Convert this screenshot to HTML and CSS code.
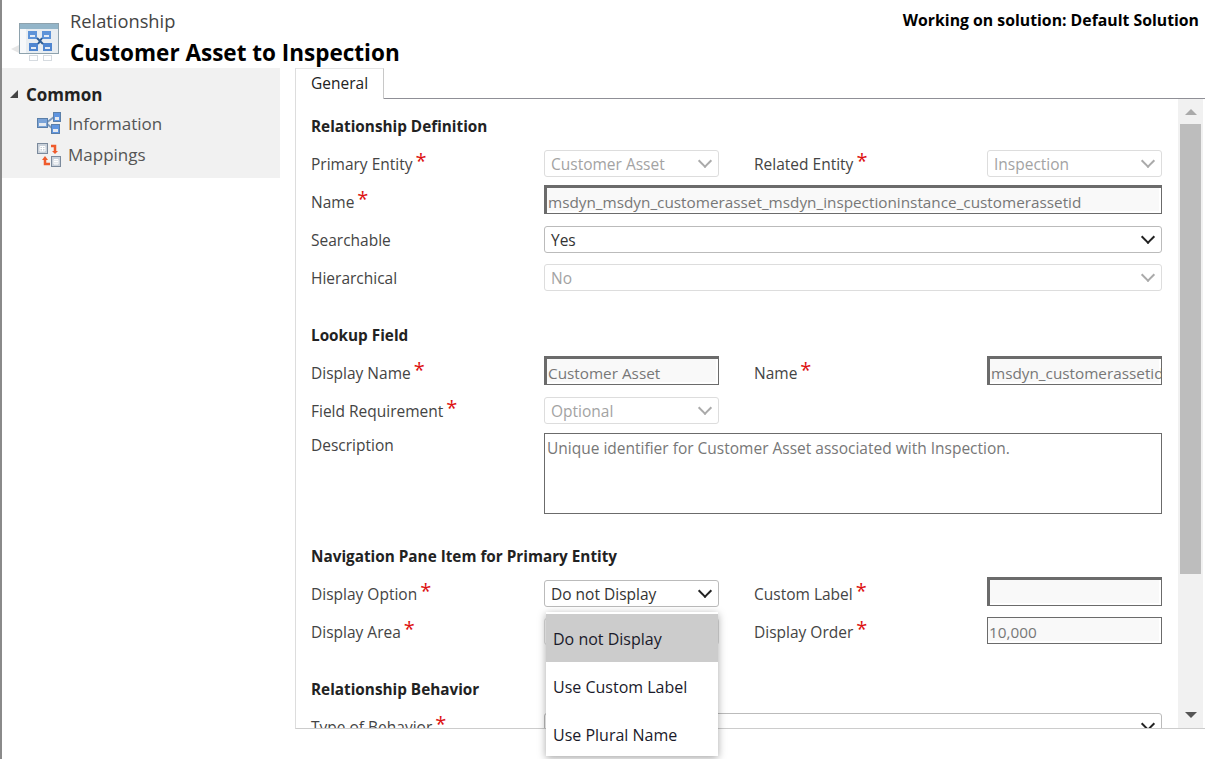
FILE: index.html
```html
<!DOCTYPE html>
<html lang="en">
<head>
    <meta charset="UTF-8">
    <meta name="viewport" content="width=device-width, initial-scale=1.0">
    <title>Relationship - Customer Asset to Inspection</title>
    <link rel="stylesheet" href="styles.css">
</head>
<body>
    <header class="top">
        <svg class="big-icon" width="50" height="50" viewBox="0 0 50 50">
            <path d="M8 27 L0 31 L8 35 Z" fill="#e6e6e6"/>
            <rect x="8.500" y="5.500" width="39" height="30" fill="#e8edf1" stroke="#8ea2ad"/>
            <rect x="9" y="6" width="38" height="5" fill="#93b5c9"/>
            <rect x="9" y="11" width="6" height="24" fill="#f6f8fa"/>
            <rect x="17" y="13" width="9" height="8" fill="#5d93d8"/>
            <rect x="31" y="13" width="9" height="8" fill="#5d93d8"/>
            <rect x="18" y="25" width="9" height="8" fill="#4f86d0"/>
            <rect x="32" y="25" width="9" height="8" fill="#4f86d0"/>
            <rect x="19" y="17" width="5" height="2" fill="#e3ebf5"/>
            <rect x="33" y="17" width="5" height="2" fill="#e3ebf5"/>
            <rect x="20" y="29" width="5" height="2" fill="#e3ebf5"/>
            <rect x="34" y="29" width="5" height="2" fill="#e3ebf5"/>
            <path d="M26 20 L32 26 M31 20 L27 26" stroke="#2f5f98" stroke-width="2"/>
            <rect x="18.500" y="37.500" width="8" height="5" fill="none" stroke="#d6dbe0"/>
            <rect x="32.500" y="37.500" width="8" height="5" fill="none" stroke="#d6dbe0"/>
        </svg>
        <div class="titles">
            <div class="kind">Relationship</div>
            <h1>Customer Asset to Inspection</h1>
        </div>
        <div class="solution">Working on solution: Default Solution</div>
    </header>

    <div class="page">
        <nav class="side">
            <div class="side-head"><span class="tri"></span>Common</div>
            <div class="side-item">
                <svg width="24" height="24" viewBox="0 0 24 24">
                    <path d="M9 11 L17 5 M9 11 L16 17" stroke="#7d9cc0" stroke-width="2" fill="none"/>
                    <rect x="0.500" y="6.500" width="10" height="9" fill="#7aa3d8" stroke="#5b7fa8"/>
                    <rect x="16.500" y="0.500" width="7" height="9" fill="#5f95e0" stroke="#5b7fa8"/>
                    <rect x="14.500" y="12.500" width="8" height="9" fill="#5f95e0" stroke="#5b7fa8"/>
                    <rect x="2" y="11" width="7" height="3" fill="#e5eaf0"/>
                    <rect x="18" y="5" width="4" height="3" fill="#e5eaf0"/>
                    <rect x="16" y="17" width="5" height="3" fill="#e5eaf0"/>
                </svg>
                Information
            </div>
            <div class="side-item">
                <svg width="24" height="24" viewBox="0 0 24 24">
                    <rect x="0.500" y="0.500" width="10" height="10" fill="#c9d1da" stroke="#7b8a9c"/>
                    <rect x="14.500" y="13.500" width="9" height="10" fill="#c9d1da" stroke="#7b8a9c"/>
                    <path d="M3 3.500 H8 V8 H3 Z M5.500 3 V8 M3 5.500 H8" stroke="#fff" fill="none"/>
                    <path d="M17 16.500 H21 V21 H17 Z M19 16 V21 M17 18.500 H21" stroke="#fff" fill="none"/>
                    <path d="M14 3 H18 V8" stroke="#ef5b2c" stroke-width="2.500" fill="none"/>
                    <path d="M15 8 H21 L18 11 Z" fill="#ef5b2c"/>
                    <path d="M13 21 H8 V17" stroke="#ef5b2c" stroke-width="2.500" fill="none"/>
                    <path d="M5 17 H11 L8 13 Z" fill="#ef5b2c"/>
                </svg>
                Mappings
            </div>
        </nav>

        <main class="content">
            <div class="tabs"><div class="tab">General</div></div>
            <div class="scroll-wrap">
                <div class="form">
                    <h2>Relationship Definition</h2>
                    <div class="row">
                        <label>Primary Entity<i>*</i></label>
                        <div class="select off">Customer Asset<span class="chev"></span></div>
                        <label class="second">Related Entity<i>*</i></label>
                        <div class="select off">Inspection<span class="chev"></span></div>
                    </div>
                    <div class="row">
                        <label>Name<i>*</i></label>
                        <div class="input wide">msdyn_msdyn_customerasset_msdyn_inspectioninstance_customerassetid</div>
                    </div>
                    <div class="row">
                        <label>Searchable</label>
                        <div class="select wide">Yes<span class="chev"></span></div>
                    </div>
                    <div class="row">
                        <label>Hierarchical</label>
                        <div class="select off wide">No<span class="chev"></span></div>
                    </div>

                    <h2 class="gap">Lookup Field</h2>
                    <div class="row">
                        <label>Display Name<i>*</i></label>
                        <div class="input">Customer Asset</div>
                        <label class="second">Name<i>*</i></label>
                        <div class="input">msdyn_customerassetid</div>
                    </div>
                    <div class="row">
                        <label>Field Requirement<i>*</i></label>
                        <div class="select off">Optional<span class="chev"></span></div>
                    </div>
                    <div class="row row-desc">
                        <label>Description</label>
                        <div class="textarea wide">Unique identifier for Customer Asset associated with Inspection.</div>
                    </div>

                    <h2 class="gap2">Navigation Pane Item for Primary Entity</h2>
                    <div class="row">
                        <label>Display Option<i>*</i></label>
                        <div class="select">Do not Display<span class="chev"></span></div>
                        <label class="second">Custom Label<i>*</i></label>
                        <div class="input"></div>
                    </div>
                    <div class="row">
                        <label>Display Area<i>*</i></label>
                        <div class="select off"></div>
                        <label class="second">Display Order<i>*</i></label>
                        <div class="input thin">10,000</div>
                    </div>

                    <h2 class="gap3">Relationship Behavior</h2>
                    <div class="row">
                        <label>Type of Behavior<i>*</i></label>
                        <div class="select wide"><span class="chev"></span></div>
                    </div>
                </div>
                <div class="scrollbar">
                    <span class="arrow up"></span>
                    <div class="thumb"></div>
                    <span class="arrow down"></span>
                </div>
            </div>
        </main>
    </div>

    <ul class="menu">
        <li class="picked">Do not Display</li>
        <li>Use Custom Label</li>
        <li>Use Plural Name</li>
    </ul>
</body>
</html>
```

FILE: styles.css
```css
html, body {
    margin: 0;
    padding: 0;
    height: 100%;
}

body {
    font-family: "Open Sans", "Noto Sans", Arial, sans-serif;
    font-size: 15.500px;
    color: #444;
    background-color: white;
    border-left: 2px solid #8a8a8a;
    box-sizing: border-box;
    height: 759px;
    overflow: hidden;
    position: relative;
}

.top {
    display: flex;
    height: 68px;
    position: relative;
}

.big-icon {
    margin: 18px 0 0 9px;
    filter: blur(0.4px);
}

.titles {
    margin-left: 9px;
}

.kind {
    font-size: 18.300px;
    line-height: 24px;
    margin-top: 9px;
    color: #444;
}

h1 {
    margin: 5px 0 0 0;
    font-size: 22.500px;
    line-height: 30px;
    color: black;
    font-weight: 700;
    white-space: nowrap;
}

.solution {
    margin-left: auto;
    margin-right: 6px;
    margin-top: 9px;
    font-size: 15.800px;
    line-height: 22px;
    font-weight: 700;
    color: black;
}

.page {
    display: flex;
    height: 661px;
}

.side {
    width: 278px;
    height: 110px;
    background-color: #f1f1f1;
    flex: none;
}

.side-head {
    display: flex;
    align-items: center;
    font-size: 17px;
    font-weight: 700;
    color: #222;
    height: 24px;
    margin: 14px 0 2px 0;
    padding-left: 8px;
}

.tri {
    width: 0;
    height: 0;
    border-left: 8px solid transparent;
    border-bottom: 8px solid #444;
    margin-right: 8px;
}

.side-item {
    display: flex;
    align-items: center;
    gap: 7px;
    padding-left: 35px;
    height: 31px;
    font-size: 17px;
    color: #555;
}

.content {
    margin-left: 15px;
    flex: 1;
    border-left: 1px solid #ddd;
    display: flex;
    flex-direction: column;
    border-bottom: 1px solid #ccc;
}

.tabs {
    height: 30px;
    border-bottom: 1px solid #8f8f96;
    flex: none;
}

.tab {
    width: 88px;
    height: 31px;
    box-sizing: border-box;
    border-right: 1px solid #c8c8c8;
    border-top: 1px solid #e4e4e4;
    background-color: white;
    color: #222;
    padding-left: 15px;
    line-height: 29px;
}

.scroll-wrap {
    flex: 1;
    display: flex;
    min-height: 0;
}

.form {
    flex: none;
    width: 882px;
    overflow: hidden;
    padding: 0 0 0 15px;
    box-sizing: border-box;
}

h2 {
    margin: 16px 0 0 0;
    font-size: 15.300px;
    line-height: 22px;
    font-weight: 700;
    color: #222;
}

h2.gap {
    margin-top: 28px;
}

h2.gap2 {
    margin-top: 31px;
}

h2.gap3 {
    margin-top: 28px;
}

.row {
    display: grid;
    grid-template-columns: 233px 175px 35px 233px 175px;
    align-items: center;
    height: 38px;
}

.row label {
    padding-top: 2px;
}

.second {
    grid-column: 4;
}

h2 + .row {
    margin-top: 7px;
}

.row-desc {
    height: 81px;
    align-items: start;
    margin-top: 4px;
}

.row-desc label {
    line-height: 24px;
    padding-top: 0;
}

label i {
    color: #d11;
    font-style: normal;
    font-size: 20px;
    line-height: 10px;
    margin-left: 3px;
    vertical-align: 2px;
}

.select, .input, .textarea {
    box-sizing: border-box;
    white-space: nowrap;
    overflow: hidden;
}

.select {
    height: 27px;
    line-height: 27px;
    border: 1px solid #bbb;
    border-radius: 3px;
    padding-left: 6px;
    color: #333;
    position: relative;
}

.select.off {
    color: #a3a3a3;
    border-color: #ddd;
}

.input {
    height: 29px;
    line-height: 28px;
    border: 1px solid #6b6b6b;
    border-top-width: 3px;
    border-left-width: 3px;
    background-color: #f9f9f9;
    box-shadow: inset -2px -2px 0 white;
    color: #777;
    font-size: 15.300px;
    padding-left: 1px;
    margin-top: -3px;
}

.input.thin {
    height: 27px;
    line-height: 29px;
    border-top-width: 1px;
    border-left-width: 1px;
    margin-top: -1px;
}

.textarea {
    height: 81px;
    border: 1px solid #6b6b6b;
    color: #777;
    padding: 2px;
    line-height: 24px;
    white-space: normal;
}

.wide {
    grid-column: 2 / 6;
}

.chev {
    position: absolute;
    right: 8px;
    top: 5px;
    width: 8px;
    height: 8px;
    border-right: 2px solid #222;
    border-bottom: 2px solid #222;
    transform: rotate(45deg);
}

.off .chev {
    border-color: #aaa;
}

.scrollbar {
    width: 25px;
    background-color: #f1f1f1;
    display: flex;
    flex-direction: column;
    align-items: center;
}

.arrow {
    width: 0;
    height: 0;
    border-left: 6px solid transparent;
    border-right: 6px solid transparent;
    flex: none;
}

.up {
    border-bottom: 6px solid #aaa;
    margin: 10px 0 9px 0;
}

.thumb {
    width: 21px;
    height: 450px;
    background-color: #bdbdbd;
    flex: none;
}

.down {
    border-top: 6px solid #555;
    margin-top: 138px;
}

.menu {
    position: absolute;
    left: 544px;
    top: 612px;
    width: 172px;
    margin: 0;
    padding: 2px 0 0 0;
    list-style: none;
    background-color: white;
    box-shadow: 0 2px 8px rgba(0, 0, 0, 0.35);
    color: #1a1a2a;
    font-size: 16px;
}

.menu li {
    height: 48px;
    line-height: 50px;
    padding-left: 7px;
    white-space: nowrap;
}

.menu li:last-child {
    height: 46px;
}

.menu .picked {
    background-color: #ccc;
}
```
